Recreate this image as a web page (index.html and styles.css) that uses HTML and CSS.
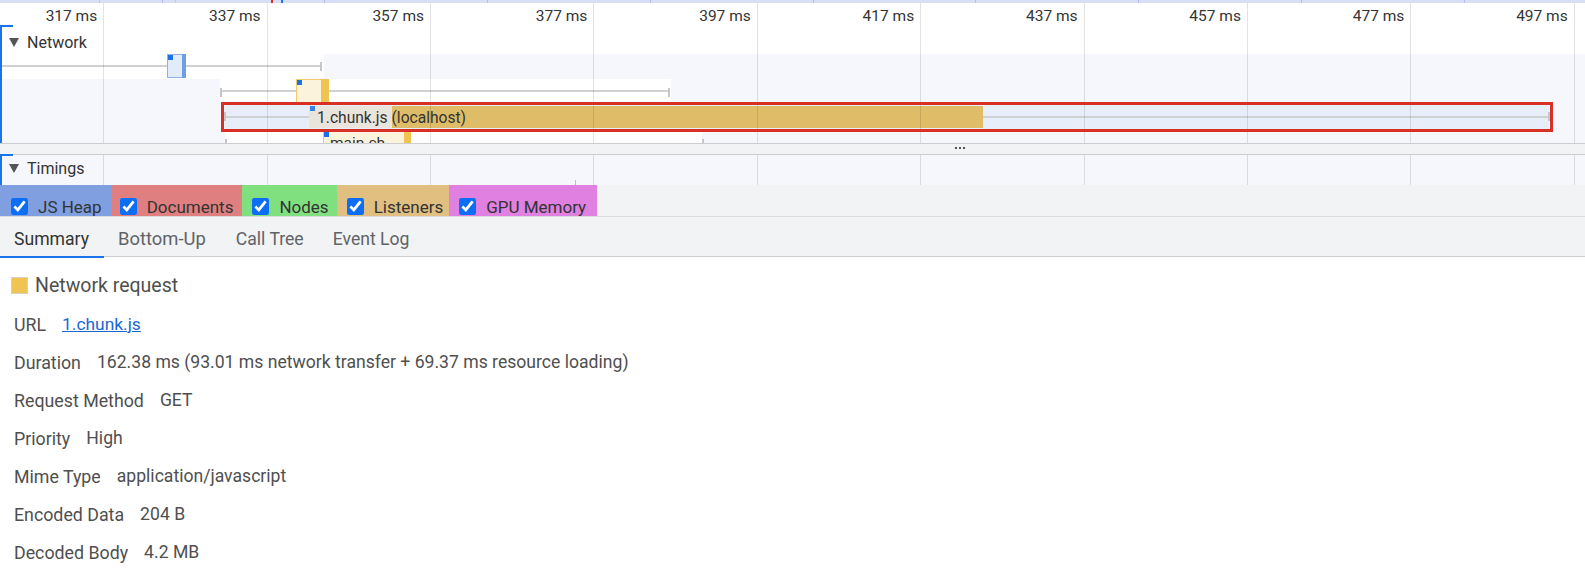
FILE: index.html
```html
<!DOCTYPE html>
<html>
<head>
<meta charset="utf-8">
<title>Performance</title>
<link rel="stylesheet" href="styles.css">
</head>
<body>
<div class="overview">
  <i class="ov-mark m99"></i><i class="ov-mark m175"></i><i class="ov-mark red"></i><i class="ov-mark blue"></i>
</div>

<div class="flame">
  <div class="ruler">
    <span>317 ms</span><span>337 ms</span><span>357 ms</span><span>377 ms</span><span>397 ms</span><span>417 ms</span><span>437 ms</span><span>457 ms</span><span>477 ms</span><span>497 ms</span>
  </div>
  <div class="track-head th-network"><i class="tri"></i>Network</div>

  <div class="nrow r1">
    <i class="whisker w1"></i><i class="tick t1r"></i>
    <div class="req req-blue b1"><i class="dot"></i><i class="tail"></i></div>
  </div>
  <div class="nrow r2">
    <i class="whisker w2"></i><i class="tick t2l"></i><i class="tick t2r"></i>
    <div class="req req-gold b2"><i class="dot"></i><i class="tail"></i></div>
  </div>
  <div class="nrow r3">
    <div class="sel-bg"></div>
    <i class="whisker w3"></i><i class="tick t3l"></i><i class="tick t3r"></i>
    <div class="bar3">
      <span class="bar3-wait"></span><span class="bar3-dl"></span>
      <i class="dot"></i>
      <span class="bar3-label">1.chunk.js (localhost)</span>
    </div>
    <div class="selection"></div>
  </div>
  <div class="nrow r4">
    <i class="tick t4l"></i><i class="tick t4r"></i>
    <div class="req req-gold b4"><i class="dot"></i><i class="tail"></i><span class="b4-label">main.ch</span></div>
  </div>

  <div class="grid"><i></i><i></i><i></i><i></i><i></i><i></i><i></i><i></i><i></i><i></i></div>
  <div class="bracket"></div>
</div>

<div class="divider"><span class="grip"><i></i><i></i><i></i></span></div>

<div class="timings">
  <div class="track-head th-timings"><i class="tri"></i>Timings</div>
  <i class="timing-mark"></i>
  <div class="grid"><i></i><i></i><i></i><i></i><i></i><i></i><i></i><i></i><i></i><i></i></div>
  <div class="bracket"></div>
</div>

<div class="legend">
  <label class="chip chip-heap"><input type="checkbox" checked>JS Heap</label>
  <label class="chip chip-docs"><input type="checkbox" checked>Documents</label>
  <label class="chip chip-nodes"><input type="checkbox" checked>Nodes</label>
  <label class="chip chip-listeners"><input type="checkbox" checked>Listeners</label>
  <label class="chip chip-gpu"><input type="checkbox" checked>GPU Memory</label>
</div>

<div class="tabs">
  <div class="tab active">Summary</div>
  <div class="tab">Bottom-Up</div>
  <div class="tab">Call Tree</div>
  <div class="tab">Event Log</div>
</div>

<div class="summary">
  <div class="title"><i class="swatch"></i>Network request</div>
  <div class="row"><span class="lbl">URL</span><a class="link" href="#">1.chunk.js</a></div>
  <div class="row"><span class="lbl">Duration</span><span>162.38 ms (93.01 ms network transfer + 69.37 ms resource loading)</span></div>
  <div class="row"><span class="lbl">Request Method</span><span>GET</span></div>
  <div class="row"><span class="lbl">Priority</span><span>High</span></div>
  <div class="row"><span class="lbl">Mime Type</span><span>application/javascript</span></div>
  <div class="row"><span class="lbl">Encoded Data</span><span>204 B</span></div>
  <div class="row"><span class="lbl">Decoded Body</span><span>4.2 MB</span></div>
</div>
</body>
</html>
```

FILE: styles.css
```css
* { box-sizing: border-box; }

body {
  margin: 0;
  width: 1585px;
  height: 573px;
  overflow: hidden;
  background: #fff;
  color: #333;
  font-family: Roboto, "Noto Sans", sans-serif;
}

i { display: block; font-style: normal; }

/* overview strip */
.overview {
  position: relative;
  height: 3px;
  background-color: #d8dff5;
  background-image: repeating-linear-gradient(90deg, transparent 0 161.75px, #b3c1ea 161.75px 162.75px);
}
.ov-mark { position: absolute; top: 0; height: 3px; width: 1px; background: #bfc9e6; }
.ov-mark.m99 { left: 99px; }
.ov-mark.m175 { left: 175px; }
.ov-mark.red { left: 271px; width: 2px; background: #d93025; }
.ov-mark.blue { left: 281px; width: 2px; background: #1a73e8; }

/* flame chart */
.flame {
  position: relative;
  z-index: 0;
  height: 140px;
  overflow: hidden;
  background: #fff;
}

.ruler {
  display: flex;
  height: 23px;
  padding-top: 3px;
  margin-left: -59.2px;
  font-size: 15.5px;
  line-height: 20px;
  color: #333;
}
.ruler span {
  flex: 0 0 163.4px;
  text-align: right;
  padding-right: 7px;
}

.track-head {
  display: flex;
  align-items: center;
  height: 28px;
  padding: 1px 0 0 9px;
  font-size: 16px;
  color: #333;
}
.th-network { padding-top: 4px; }
.tri {
  width: 0;
  height: 0;
  border-left: 5px solid transparent;
  border-right: 5px solid transparent;
  border-top: 9px solid #555;
  margin-right: 8px;
}

.nrow { position: relative; height: 25px; }
.r1 { background: linear-gradient(90deg, #fff 0 324px, #f5f7fc 324px); }
.r2 { background: linear-gradient(90deg, #f5f7fc 0 220px, #fff 220px 671px, #f5f7fc 671px); }
.r3 { background: #f5f7fc; }
.r4 { height: 14px; overflow: hidden; background: linear-gradient(90deg, #f5f7fc 0 225px, #fff 225px 702px, #f5f7fc 702px); }

.whisker { position: absolute; height: 2px; background: #cfd1d4; }
.w1 { left: 0; width: 321px; top: 11px; }
.w2 { left: 221px; width: 448px; top: 11px; }
.w3 { left: 225px; width: 1324px; top: 12px; }

.tick { position: absolute; width: 2px; height: 9px; background: #c4c6ca; }
.t1r { left: 320px; top: 8px; }
.t2l { left: 220px; top: 9px; }
.t2r { left: 668px; top: 9px; }
.t3l { left: 224px; top: 8px; }
.t3r { left: 1548px; top: 8px; }
.t4l { left: 225px; top: 10px; height: 4px; }
.t4r { left: 702px; top: 10px; height: 4px; }

.req { position: absolute; top: 0; height: 24px; border: 1px solid; }
.req .dot { position: absolute; left: 0; top: 0; width: 5px; height: 5px; background: #1a73e8; }
.req .tail { position: absolute; right: -1px; top: -1px; bottom: -1px; }
.req-blue { background: #e2ebf9; border-color: #8cb2ea; }
.req-blue .tail { width: 4px; background: #6d9fe4; }
.req-gold { background: #fcf3dd; border-color: #f0cb69; }
.req-gold .tail { width: 8px; background: #f0c453; }

.b1 { left: 167px; width: 19px; }
.b2 { left: 296px; width: 33px; }
.b4 { left: 323px; top: 2px; width: 88px; }
.b4 .tail { width: 7px; }
.b4-label {
  position: absolute;
  left: 6px;
  top: 0;
  font-size: 15.5px;
  line-height: 22px;
  color: #333;
}

.sel-bg { position: absolute; left: 225px; top: 1px; width: 1324px; height: 24px; background: #e8eef9; }

.bar3 {
  position: absolute;
  left: 309px;
  top: 2px;
  width: 674px;
  height: 22px;
  display: flex;
}
.bar3-wait { width: 83px; background: #e9e5dc; }
.bar3-dl { flex: 1; background: #dfbc67; }
.bar3 .dot { position: absolute; left: 1px; top: 0; width: 5px; height: 5px; background: #3b82e8; }
.bar3-label {
  position: absolute;
  left: 8px;
  top: 1px;
  font-size: 15.6px;
  line-height: 22px;
  color: #333;
  white-space: nowrap;
}

.selection {
  position: absolute;
  z-index: 2;
  left: 221px;
  top: -2px;
  width: 1332px;
  height: 30px;
  border: 3px solid #d93025;
}

/* grid overlay */
.grid {
  position: absolute;
  z-index: 1;
  top: 0;
  bottom: 0;
  left: -59.2px;
  display: flex;
  pointer-events: none;
}
.grid i {
  flex: 0 0 163.4px;
  border-right: 1px solid rgba(0, 0, 0, 0.11);
}

.bracket {
  position: absolute;
  z-index: 3;
  left: 0;
  top: 22px;
  bottom: 0;
  width: 13px;
  border-left: 2.5px solid #1a73e8;
  border-top: 2px solid #1a73e8;
}

/* divider */
.divider {
  height: 12px;
  background: #f1f3f4;
  border-top: 1px solid #cbcdd1;
  border-bottom: 1px solid #cbcdd1;
  display: flex;
  justify-content: center;
  padding-left: 334px;
  padding-top: 3px;
}
.grip { display: flex; gap: 2px; height: 3px; }
.grip i { width: 2px; height: 2px; background: #555; }

/* timings */
.timings {
  position: relative;
  z-index: 0;
  height: 30px;
  background: #f5f7fc;
}
.th-timings {
  height: 26px;
  padding-top: 0;
}
.timings .bracket { top: -1px; }
.timing-mark {
  position: absolute;
  left: 575px;
  top: 25px;
  width: 1px;
  height: 5px;
  background: #f0c040;
}

/* legend */
.legend {
  display: flex;
  height: 32px;
  background: #f1f3f4;
  border-bottom: 1px solid #dadce0;
}
.chip {
  display: flex;
  align-items: center;
  gap: 10px;
  padding: 12px 9px 0 10px;
  font-size: 17px;
  color: #333;
}
.chip input {
  width: 17px;
  height: 17px;
  margin: 0;
  accent-color: #0b6ef5;
}
.chip-heap { background: #7f9fe0; padding-left: 11px; }
.chip-docs { background: #e07f7f; padding-left: 9px; }
.chip-nodes { background: #80e080; padding-right: 8px; }
.chip-listeners { background: #e0bf80; padding-right: 6px; }
.chip-gpu { background: #e080e0; padding-right: 11px; }

/* tabs */
.tabs {
  display: flex;
  height: 40px;
  padding-top: 4px;
  background: #f1f3f4;
  border-bottom: 1px solid #cbcdd1;
}
.tab {
  position: relative;
  display: flex;
  align-items: center;
  padding: 0 15px 0 14px;
  font-size: 17.6px;
  color: #5f6368;
}
.tab.active { color: #333; }
.tab.active::after {
  content: "";
  position: absolute;
  left: 0;
  right: 0;
  bottom: -2px;
  height: 2px;
  background: #1a73e8;
}
.tab:nth-child(2) { font-size: 18.4px; padding-right: 16px; }

/* summary */
.summary {
  padding: 13px 0 0 14px;
  color: #4f4f4f;
}
.title {
  display: flex;
  align-items: center;
  height: 30px;
  margin-bottom: 5px;
  font-size: 19.5px;
}
.swatch {
  width: 17px;
  height: 17px;
  margin-left: -3px;
  margin-right: 7px;
  background: #f0c453;
  border: 1px solid #d6d0c0;
}
.row {
  display: flex;
  align-items: center;
  height: 38px;
  font-size: 17.8px;
}
.lbl { margin-right: 16px; }
.row span:last-child { font-size: 17.6px; }
.link { color: #1a67d2; text-decoration: underline; font-size: 17.4px; }
```
